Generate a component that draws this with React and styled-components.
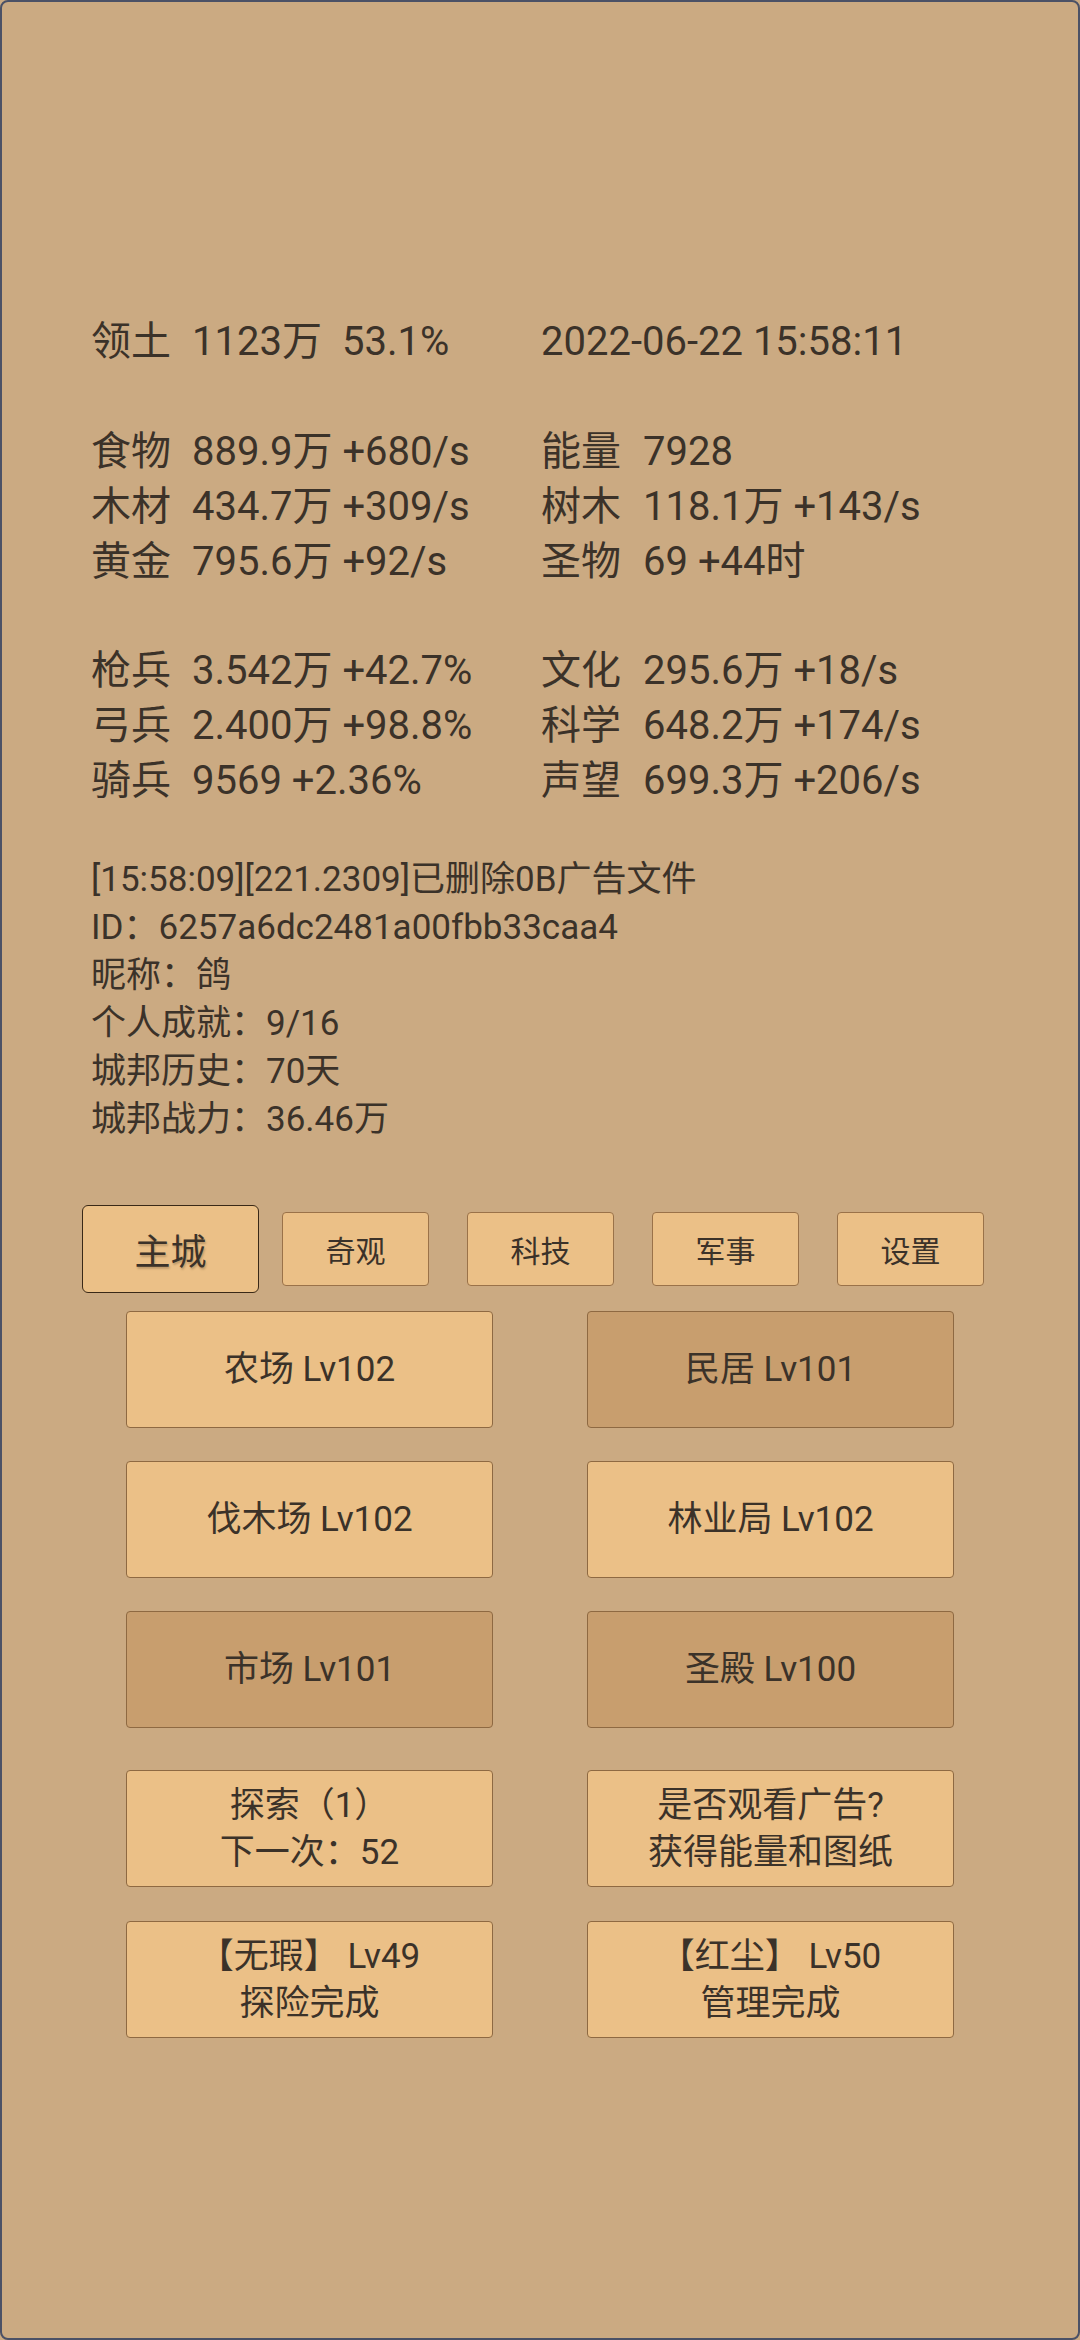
import React from "react";
import styled, { createGlobalStyle } from "styled-components";

const Global = createGlobalStyle`
  html, body { margin: 0; padding: 0; background: #cbaa82; }
  body { font-family: "Roboto", "Noto Sans CJK SC", sans-serif; color: #3b3229; }
  * { box-sizing: border-box; }
`;

const Screen = styled.div`
  width: 1080px;
  height: 2340px;
  background: #cbaa82;
  border: 2px solid #4b5166;
  border-radius: 8px;
  padding: 313px 0 0 89px;
  display: flex;
  flex-direction: column;
  overflow: hidden;
`;

const Stats = styled.div`
  display: grid;
  grid-template-columns: 101px 349px 102px auto;
  font-size: 40px;
  line-height: 54.9px;
  white-space: nowrap;
`;

const Blank = styled.div`
  grid-column: 1 / -1;
  height: 54.9px;
`;

const Cell = styled.span``;

const Wide = styled.span`
  grid-column: ${(p) => p.$span};
`;

const Gap = styled.span`
  margin-left: 20px;
`;

const Log = styled.div`
  margin-top: 47px;
  font-size: 35px;
  line-height: 48px;
  white-space: nowrap;
`;

const Line = styled.div``;

const Tabs = styled.div`
  margin: 61px 0 0 -13px;
  width: 925px;
  height: 88px;
  display: grid;
  grid-template-columns: repeat(5, 185px);
  align-items: center;
  justify-items: center;
`;

const Tab = styled.div`
  width: ${(p) => (p.$active ? "177px" : "147px")};
  height: ${(p) => (p.$active ? "88px" : "74px")};
  background: #ebc087;
  border: ${(p) => (p.$active ? "1.5px solid #3a2917" : "1px solid #9a7249")};
  border-radius: ${(p) => (p.$active ? "6px" : "4px")};
  display: flex;
  align-items: center;
  justify-content: center;
  font-size: ${(p) => (p.$active ? "36px" : "30px")};
  text-shadow: ${(p) => (p.$active ? "1px 2px 2px rgba(60,40,20,0.25)" : "none")};
`;

const Grid = styled.div`
  margin: ${(p) => p.$mt}px 0 0 35px;
  display: grid;
  grid-template-columns: 367px 367px;
  grid-auto-rows: 117px;
  column-gap: 94px;
  row-gap: ${(p) => p.$rg}px;
`;

const Btn = styled.div`
  background: ${(p) => (p.$dim ? "#c89e6e" : "#ebc087")};
  border: 1px solid #8e6942;
  border-radius: 4px;
  display: flex;
  flex-direction: column;
  align-items: center;
  justify-content: center;
  font-size: 35px;
  line-height: 47px;
  text-align: center;
  white-space: pre;
`;

const stats = [
  ["食物", "889.9万 +680/s", "能量", "7928"],
  ["木材", "434.7万 +309/s", "树木", "118.1万 +143/s"],
  ["黄金", "795.6万 +92/s", "圣物", "69 +44时"],
  null,
  ["枪兵", "3.542万 +42.7%", "文化", "295.6万 +18/s"],
  ["弓兵", "2.400万 +98.8%", "科学", "648.2万 +174/s"],
  ["骑兵", "9569 +2.36%", "声望", "699.3万 +206/s"],
];

const logs = [
  "[15:58:09][221.2309]已删除0B广告文件",
  "ID：6257a6dc2481a00fbb33caa4",
  "昵称：鸽",
  "个人成就：9/16",
  "城邦历史：70天",
  "城邦战力：36.46万",
];

const tabs = ["主城", "奇观", "科技", "军事", "设置"];

const buildings = [
  ["农场 Lv102", false],
  ["民居 Lv101", true],
  ["伐木场 Lv102", false],
  ["林业局 Lv102", false],
  ["市场 Lv101", true],
  ["圣殿 Lv100", true],
];

const actions = [
  "探索（1）\n下一次：52",
  "是否观看广告?\n获得能量和图纸",
  "【无瑕】 Lv49\n探险完成",
  "【红尘】 Lv50\n管理完成",
];

export default function App() {
  return (
    <>
      <Global />
      <Screen>
        <Stats>
          <Cell>领土</Cell>
          <Cell>
            1123万<Gap>53.1%</Gap>
          </Cell>
          <Wide $span="3 / 5">2022-06-22 15:58:11</Wide>
          <Blank />
          {stats.map((r, i) =>
            r ? (
              <React.Fragment key={i}>
                <Cell>{r[0]}</Cell>
                <Cell>{r[1]}</Cell>
                <Cell>{r[2]}</Cell>
                <Cell>{r[3]}</Cell>
              </React.Fragment>
            ) : (
              <Blank key={i} />
            )
          )}
        </Stats>
        <Log>
          {logs.map((l) => (
            <Line key={l}>{l}</Line>
          ))}
        </Log>
        <Tabs>
          {tabs.map((t, i) => (
            <Tab key={t} $active={i === 0}>
              {t}
            </Tab>
          ))}
        </Tabs>
        <Grid $mt={18} $rg={33}>
          {buildings.map(([t, d]) => (
            <Btn key={t} $dim={d}>
              {t}
            </Btn>
          ))}
        </Grid>
        <Grid $mt={42} $rg={34}>
          {actions.map((t) => (
            <Btn key={t}>{t}</Btn>
          ))}
        </Grid>
      </Screen>
    </>
  );
}
